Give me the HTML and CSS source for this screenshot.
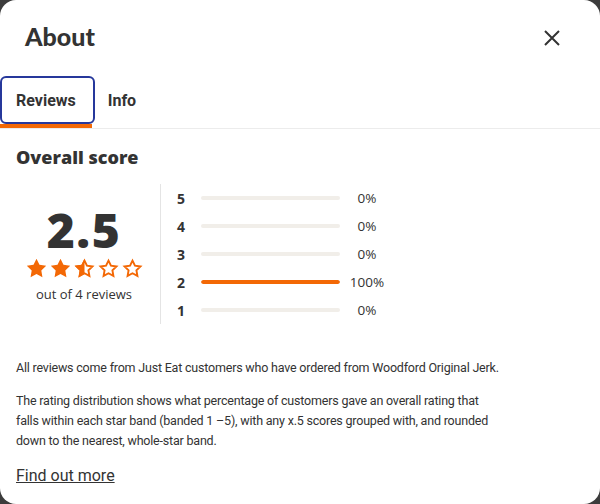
FILE: index.html
```html
<!DOCTYPE html>
<html lang="en">
<head>
  <meta charset="UTF-8">
  <meta name="viewport" content="width=device-width, initial-scale=1.0">
  <title>About</title>
  <link rel="stylesheet" href="styles.css">
</head>
<body>
  <div class="modal">
    <header class="modal-head">
      <h1>About</h1>
      <button class="close" aria-label="Close">
        <svg width="18" height="18" viewBox="0 0 18 18"><path d="M2 2L16 16M16 2L2 16" stroke="#333" stroke-width="2" fill="none"/></svg>
      </button>
    </header>

    <nav class="tabs">
      <button class="tab active">Reviews</button>
      <button class="tab">Info</button>
    </nav>

    <section class="content">
      <h2>Overall score</h2>

      <div class="score">
        <div class="summary">
          <div class="rating">2.5</div>
          <div class="stars">
            <svg viewBox="0 0 24 24"><path class="full" d="M12 .8l3.4 7 7.7 1.1-5.6 5.4 1.3 7.6L12 18.3l-6.8 3.6 1.3-7.6L.9 8.9l7.7-1.1z"/></svg>
            <svg viewBox="0 0 24 24"><path class="full" d="M12 .8l3.4 7 7.7 1.1-5.6 5.4 1.3 7.6L12 18.3l-6.8 3.6 1.3-7.6L.9 8.9l7.7-1.1z"/></svg>
            <svg viewBox="0 0 24 24">
              <path class="empty" d="M12 3l2.8 5.8 6.3.9-4.6 4.4 1.1 6.3L12 17.4l-5.6 3 1.1-6.3-4.6-4.4 6.3-.9z"/>
              <path class="full" d="M12 .8V18.3l-6.8 3.6 1.3-7.6L.9 8.9l7.7-1.1z"/>
            </svg>
            <svg viewBox="0 0 24 24"><path class="empty" d="M12 3l2.8 5.8 6.3.9-4.6 4.4 1.1 6.3L12 17.4l-5.6 3 1.1-6.3-4.6-4.4 6.3-.9z"/></svg>
            <svg viewBox="0 0 24 24"><path class="empty" d="M12 3l2.8 5.8 6.3.9-4.6 4.4 1.1 6.3L12 17.4l-5.6 3 1.1-6.3-4.6-4.4 6.3-.9z"/></svg>
          </div>
          <div class="count">out of 4 reviews</div>
        </div>

        <div class="dist">
          <div class="row"><span class="num">5</span><span class="bar"><span class="fill" style="width:0%"></span></span><span class="pct">0%</span></div>
          <div class="row"><span class="num">4</span><span class="bar"><span class="fill" style="width:0%"></span></span><span class="pct">0%</span></div>
          <div class="row"><span class="num">3</span><span class="bar"><span class="fill" style="width:0%"></span></span><span class="pct">0%</span></div>
          <div class="row"><span class="num">2</span><span class="bar"><span class="fill" style="width:100%"></span></span><span class="pct">100%</span></div>
          <div class="row"><span class="num">1</span><span class="bar"><span class="fill" style="width:0%"></span></span><span class="pct">0%</span></div>
        </div>
      </div>

      <p class="note first">All reviews come from Just Eat customers who have ordered from Woodford Original Jerk.</p>
      <p class="note">The rating distribution shows what percentage of customers gave an overall rating that falls within each star band (banded 1 –5), with any x.5 scores grouped with, and rounded down to the nearest, whole-star band.</p>
      <a class="more" href="#">Find out more</a>
    </section>
  </div>
</body>
</html>
```

FILE: styles.css
```css
body {
  margin: 0;
  background: #3c3c3c;
  font-family: Roboto, sans-serif;
  color: #333;
}

.modal {
  width: 600px;
  height: 504px;
  background: white;
  border-radius: 16px;
  overflow: hidden;
}

.modal-head {
  height: 76px;
  display: flex;
  align-items: center;
  justify-content: space-between;
  padding: 0 39px 0 25px;
}

.modal-head h1 {
  margin: 0 0 4px;
  font-family: Lato, sans-serif;
  font-weight: 900;
  font-size: 25px;
  color: #333;
}

.close {
  border: none;
  background: none;
  padding: 0;
  width: 18px;
  height: 18px;
}

.tabs {
  display: flex;
  border-bottom: 1px solid #ececec;
}

.tab {
  position: relative;
  height: 52px;
  padding: 0 16px 4px;
  border: none;
  background: none;
  font-family: Roboto, sans-serif;
  font-size: 16px;
  font-weight: 700;
  color: #333;
}

.tab.active::before {
  content: "";
  position: absolute;
  top: 0;
  left: 0;
  right: -3px;
  bottom: 4px;
  border: 2px solid #26389b;
  border-radius: 6px;
}

.tab.active::after {
  content: "";
  position: absolute;
  left: 0;
  right: 0;
  bottom: 0;
  height: 4px;
  background: #f36805;
}

.content {
  padding: 0 16px;
}

.content h2 {
  margin: 16px 0 15px;
  font-family: "Open Sans", sans-serif;
  font-weight: 800;
  font-size: 18px;
  line-height: 24px;
  color: #333;
}

.score {
  display: flex;
}

.summary {
  width: 136px;
  margin-right: 8px;
  display: flex;
  flex-direction: column;
  align-items: center;
  padding-top: 20px;
}

.rating {
  font-family: "Open Sans", sans-serif;
  font-weight: 800;
  font-size: 48px;
  line-height: 52px;
  letter-spacing: 1.5px;
  color: #333;
}

.stars {
  display: flex;
  gap: 3px;
  margin-top: 2px;
}

.stars svg {
  width: 21px;
  height: 21px;
}

.stars .full {
  fill: #f36805;
}

.stars .empty {
  fill: none;
  stroke: #f36805;
  stroke-width: 2.2;
  stroke-linejoin: miter;
}

.count {
  margin-top: 6px;
  font-family: "Open Sans", sans-serif;
  font-size: 13px;
  color: #333;
}

.dist {
  border-left: 1px solid #e4e4e4;
  padding-left: 16px;
}

.row {
  display: grid;
  grid-template-columns: 24px 139px 54px;
  align-items: center;
  height: 28px;
}

.num {
  font-family: "Open Sans", sans-serif;
  font-weight: 700;
  font-size: 14px;
}

.bar {
  height: 4px;
  border-radius: 2px;
  background: #f1eee9;
  overflow: hidden;
}

.fill {
  display: block;
  height: 100%;
  background: #f36805;
  border-radius: 2px;
}

.pct {
  text-align: center;
  font-family: "Open Sans", sans-serif;
  font-size: 13.5px;
}

.note {
  max-width: 484px;
  margin: 13px 0 0;
  font-size: 12.5px;
  letter-spacing: -0.2px;
  line-height: 20px;
}

.note.first {
  margin-top: 34px;
}

.more {
  display: inline-block;
  margin-top: 13px;
  font-size: 16px;
  line-height: 24px;
  color: #333;
}
```
